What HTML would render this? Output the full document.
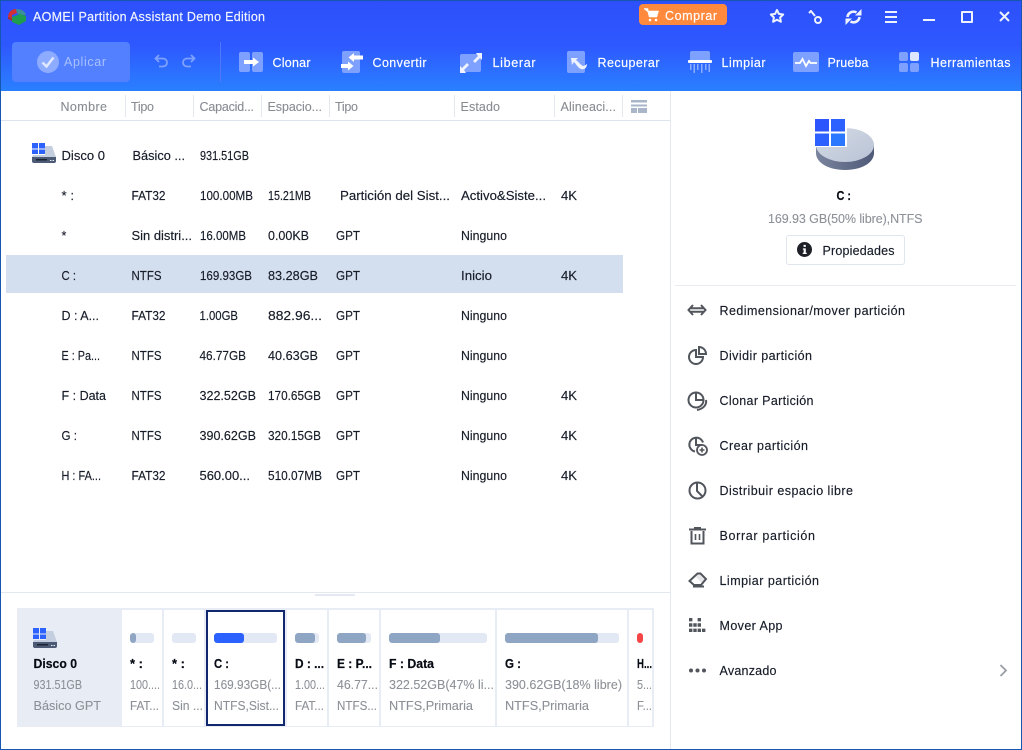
<!DOCTYPE html>
<html lang="es"><head><meta charset="utf-8"><title>AOMEI Partition Assistant Demo Edition</title>
<style>
html,body{margin:0;padding:0;background:#fff}
body{position:relative;width:1022px;height:750px;overflow:hidden;font-family:"Liberation Sans",sans-serif}
.a{position:absolute}
#L{position:absolute;left:0;top:0;z-index:5}
#L text{font-family:"Liberation Sans",sans-serif;font-size:12.5px;white-space:pre}
.d{fill:#161c28;stroke:#161c28;stroke-width:.15px}
.w{fill:#fff;stroke:#fff;stroke-width:.15px}
.h{fill:#878b92;stroke:#878b92;stroke-width:.1px}
.g{fill:#8c9097;stroke:#8c9097;stroke-width:.1px}
.b{fill:#070b14;stroke:#070b14;stroke-width:.2px;font-weight:bold}
.s{position:absolute;top:95px;width:1px;height:22px;background:#e4e8f0}
.c{position:absolute;top:610px;height:116px;background:#fff}
.bar{position:absolute;top:633px;height:10px;background:#e2e8f4;border-radius:3px;overflow:hidden}
.bar i{position:absolute;left:0;top:0;bottom:0;background:#8fa5c4;border-radius:3px}
</style></head><body>
<div class="a" style="left:0;top:0;width:1022px;height:91px;background:linear-gradient(180deg,#2d50fb 0,#2e58ff 50%,#2a80ff 100%)"></div>
<div class="a" style="left:0;top:0;width:1020px;height:748px;border:1px solid #1557b0;z-index:9;pointer-events:none"></div>

<svg class="a" style="left:8px;top:9px" width="19" height="16" viewBox="0 0 19 16"><path d="M0 8C0 3 4 0 8 0l1 4-5 2v3z" fill="#d22e35"/><path d="M8 0c5 0 9 2 10 6l-6 0-3-2z" fill="#3a8f9a"/><path d="M4 8l8-3 6 2v5l-7 4-7-3z" fill="#1f9c4e"/><path d="M0 8l4 1v3L0 10z" fill="#a3303a"/></svg>

<div class="a" style="left:639px;top:4px;width:88px;height:21px;background:#ff8a3d;border-radius:4px"></div>
<svg class="a" style="left:644px;top:8px" width="16" height="14" viewBox="0 0 16 14"><path d="M1 1h2.500l2 7.500h7L14 3.500H4.200z" fill="#fff" stroke="#fff" stroke-width="1.400"/><circle cx="6" cy="12" r="1.300" fill="#fff"/><circle cx="12" cy="12" r="1.300" fill="#fff"/></svg>

<svg class="a" style="left:769px;top:8px" width="16" height="16" viewBox="0 0 16 16"><path d="M8 2l1.900 3.900 4.300.6-3.100 3 .8 4.300L8 11.700l-3.900 2.100.8-4.300-3.100-3 4.300-.6z" fill="none" stroke="#eef2ff" stroke-width="2" stroke-linejoin="round"/></svg>
<svg class="a" style="left:807px;top:10px" width="16" height="15" viewBox="0 0 16 15"><path d="M2 3l2-2 4 5" stroke="#eef2ff" stroke-width="2" fill="none"/><circle cx="11" cy="10" r="3" fill="none" stroke="#eef2ff" stroke-width="2"/></svg>
<svg class="a" style="left:845px;top:9px" width="17" height="16" viewBox="0 0 17 16"><path d="M2.500 8a6 6 0 0 1 9-4.500M14.500 8a6 6 0 0 1-9 4.500" fill="none" stroke="#eef2ff" stroke-width="2.600"/><path d="M10 6.500h6.500V0zM7 9.500H.5V16z" fill="#eef2ff"/></svg>
<div class="a" style="left:885px;top:11px;width:12px;height:2px;background:#eef2ff;box-shadow:0 5px 0 #eef2ff,0 10px 0 #eef2ff"></div>
<div class="a" style="left:923px;top:19px;width:12px;height:2px;background:#eef2ff"></div>
<div class="a" style="left:961px;top:11px;width:8px;height:8px;border:2px solid #eef2ff;border-radius:1px"></div>
<svg class="a" style="left:998px;top:10px" width="13" height="13" viewBox="0 0 13 13"><path d="M2 2l9 9M11 2l-9 9" stroke="#eef2ff" stroke-width="2"/></svg>

<div class="a" style="left:12px;top:42px;width:118px;height:40px;background:#5280ff;border-radius:4px"></div>
<svg class="a" style="left:37px;top:51px" width="22" height="22" viewBox="0 0 22 22"><circle cx="11" cy="11" r="11" fill="#8dabff"/><path d="M5.500 11.500l4 4 7-9" fill="none" stroke="#dfe8ff" stroke-width="2.500"/></svg>
<svg class="a" style="left:154px;top:54px" width="16" height="14" viewBox="0 0 16 14"><path d="M5 1L1.500 4.500 5 8M2 4.500h7a4 4 0 0 1 0 8H5" fill="none" stroke="#7ea0ff" stroke-width="1.800"/></svg>
<svg class="a" style="left:180px;top:54px" width="16" height="14" viewBox="0 0 16 14"><path d="M11 1l3.500 3.500L11 8M14 4.500H7a4 4 0 0 0 0 8h4" fill="none" stroke="#7ea0ff" stroke-width="1.800"/></svg>
<div class="a" style="left:220px;top:42px;width:1px;height:40px;background:#4f78ff"></div>

<svg class="a" style="left:239px;top:52px" width="24" height="20" viewBox="0 0 24 20"><rect width="11" height="20" rx="2" fill="#7ea0ff"/><rect x="13" width="11" height="20" rx="2" fill="#7ea0ff"/><path d="M5 8h9V5.500l6 4.500-6 4.500V12H5z" fill="#fff"/></svg>
<svg class="a" style="left:341px;top:51px" width="23" height="22" viewBox="0 0 23 22"><rect x="1" width="18" height="22" rx="2" fill="#7ea0ff"/><path d="M22 4.500H13V2L7.500 6.500 13 11V8.500h9zM0 13h7v-2.500l5.500 4.500L7 19.500V17H0z" fill="#fff"/></svg>
<svg class="a" style="left:460px;top:53px" width="22" height="20" viewBox="0 0 22 20"><rect y="1" width="21" height="18" rx="2" fill="#7ea0ff"/><path d="M22 0v7l-2-2-5 5-2-2 5-5-2-3zM0 20v-7l2 2 5-5 2 2-5 5 2 3z" fill="#eef3ff"/></svg>
<svg class="a" style="left:567px;top:51px" width="22" height="22" viewBox="0 0 22 22"><rect width="18" height="22" rx="2" fill="#7ea0ff"/><path d="M4 7h7L9 9c3 2 5 6 8 6l3-2c0 4-3 6-6 5-3-1-5-5-7-7l-2 3z" fill="#eef3ff"/></svg>
<svg class="a" style="left:688px;top:50px" width="24" height="24" viewBox="0 0 24 24"><path d="M2 10V3a2 2 0 0 1 2-2h16a2 2 0 0 1 2 2v7z" fill="#7ea0ff"/><rect y="10" width="24" height="3" rx="1" fill="#fff"/><path d="M2 14h1.500v6H2zM5.500 14H7v9H5.500zM9 14h1.500v6H9zM13 14h1.500v9H13zM17 14h1.500v6H17zM20.500 14H22v8h-1.500z" fill="#8fadff"/></svg>
<svg class="a" style="left:793px;top:52px" width="26" height="20" viewBox="0 0 26 20"><rect width="26" height="20" rx="2" fill="#7ea0ff"/><path d="M2 11h5l2.500-4 3.500 7 3-5 1.500 2H24" fill="none" stroke="#fff" stroke-width="1.800"/></svg>
<svg class="a" style="left:899px;top:52px" width="20" height="20" viewBox="0 0 20 20"><rect width="9" height="9" rx="2" fill="#7ea0ff"/><rect x="11" width="9" height="9" rx="2" fill="#dde7ff"/><rect y="11" width="9" height="9" rx="2" fill="#7ea0ff"/><rect x="11" y="11" width="9" height="9" rx="2" fill="#7ea0ff"/></svg>

<div class="s" style="left:125px"></div><div class="s" style="left:193px"></div><div class="s" style="left:261px"></div><div class="s" style="left:329px"></div><div class="s" style="left:454px"></div><div class="s" style="left:554px"></div><div class="s" style="left:622px"></div>
<svg class="a" style="left:631px;top:100px" width="16" height="13" viewBox="0 0 16 13"><path d="M0 0h16v2.500H0zM0 4.500h16v2H0zM0 8h6v5H0zM7 8h9v5H7z" fill="#a9b6c9"/></svg>
<div class="a" style="left:1px;top:120px;width:669px;height:1px;background:#dde3ee"></div>
<div class="a" style="left:670px;top:91px;width:1px;height:658px;background:#e3e7f0"></div>
<div class="a" style="left:6px;top:255px;width:617px;height:38px;background:#d3deee"></div>

<svg class="a" style="left:32px;top:143px" width="24" height="20" viewBox="0 0 24 20"><path d="M13 3h7l4 11H0l1-2h12z" fill="#c5cede"/><path d="M0 14h24v4a2 2 0 0 1-2 2H2a2 2 0 0 1-2-2z" fill="#4d5a75"/><path d="M4 16h11v1.500H4z" fill="#1b2232"/><path d="M18 17h1.500v1H18zM20.500 17H22v1h-1.500z" fill="#e8edf5"/><path d="M0 0h6v5.500H0zM7 0h6v5.500H7zM0 6.500h6V11H0zM7 6.500h6V11H7z" fill="#2d62ff"/></svg>

<!-- right panel art -->
<svg class="a" style="left:815px;top:119px" width="60" height="52" viewBox="0 0 60 52">
<defs><linearGradient id="p" x1="0" y1="0" x2="1" y2="1"><stop offset="0" stop-color="#d5dbe6"/><stop offset="1" stop-color="#b9c3d5"/></linearGradient><linearGradient id="q" x1="0" y1="0" x2="1" y2="0"><stop offset="0" stop-color="#7a849e"/><stop offset="1" stop-color="#4f5a78"/></linearGradient></defs>
<path d="M1 26v8c0 10 13 17 29 17s29-7 29-17v-8z" fill="url(#q)"/><ellipse cx="30" cy="26" rx="29" ry="17" fill="url(#p)"/>
<rect width="32" height="28" fill="#fff"/>
<path d="M0 0h14v12.500H0z" fill="#2c55fd"/><path d="M16 0h14v12.500H16z" fill="#2c60ff"/><path d="M0 14.500h14V27H0z" fill="#2c60ff"/><path d="M16 14.500h14V27H16z" fill="#2a78ff"/></svg>
<div class="a" style="left:786px;top:235px;width:117px;height:28px;border:1px solid #e0e5ee;border-radius:3px"></div>
<svg class="a" style="left:797px;top:242px" width="15" height="15" viewBox="0 0 16 16"><circle cx="8" cy="8" r="8" fill="#1e2128"/><path d="M7 3h2.400v2.200H7zM6.300 6.800h3.100v4.700h1v1.300H6.100v-1.300h1V8.100h-.8z" fill="#fff"/></svg>
<div class="a" style="left:675px;top:285px;width:341px;height:1px;background:#e8ebf2"></div>

<svg class="a" style="left:687px;top:302px" width="20" height="16" viewBox="0 0 20 16"><path d="M6 3L1.500 8 6 13M14 3l4.500 5-4.500 5M3 6.200h14M3 9.800h14" fill="none" stroke="#51555c" stroke-width="2"/></svg>
<svg class="a" style="left:688px;top:346px" width="20" height="19" viewBox="0 0 20 19"><path d="M8 4a7 7 0 1 0 7 7H8z" fill="none" stroke="#51555c" stroke-width="2"/><path d="M11 1a7 7 0 0 1 7 7h-7z" fill="none" stroke="#51555c" stroke-width="2"/></svg>
<svg class="a" style="left:687px;top:391px" width="21" height="20" viewBox="0 0 21 20"><circle cx="9" cy="9" r="7.500" fill="none" stroke="#51555c" stroke-width="2"/><path d="M9 2v7h7" fill="none" stroke="#51555c" stroke-width="2"/><path d="M19 9c1 5-3 9-9 10" fill="none" stroke="#51555c" stroke-width="2"/></svg>
<svg class="a" style="left:688px;top:436px" width="20" height="20" viewBox="0 0 20 20"><path d="M7 15.500A7 7 0 1 1 15 6.500" fill="none" stroke="#51555c" stroke-width="2"/><path d="M8 1v8h6" fill="none" stroke="#51555c" stroke-width="2"/><circle cx="14" cy="14" r="5" fill="#fff" stroke="#51555c" stroke-width="1.800"/><path d="M11.500 14h5M14 11.500v5" stroke="#51555c" stroke-width="1.600"/></svg>
<svg class="a" style="left:688px;top:481px" width="19" height="19" viewBox="0 0 19 19"><circle cx="9.500" cy="9.500" r="8" fill="none" stroke="#51555c" stroke-width="2"/><path d="M9 2.500V10l5 5" fill="none" stroke="#51555c" stroke-width="2"/></svg>
<svg class="a" style="left:689px;top:527px" width="17" height="18" viewBox="0 0 17 18"><path d="M0 2.500h17M5 1h7" stroke="#51555c" stroke-width="2"/><path d="M2.500 4v12.500h12V4" fill="none" stroke="#51555c" stroke-width="2"/><path d="M6.500 7v6M10.500 7v6" stroke="#51555c" stroke-width="1.600"/></svg>
<svg class="a" style="left:688px;top:572px" width="20" height="16" viewBox="0 0 20 16"><path d="M1.500 9L9.500 1.500h3L18 7l-5 6H6z" fill="none" stroke="#51555c" stroke-width="2"/><path d="M5 14.500h11" stroke="#51555c" stroke-width="2"/><path d="M9.500 1.500h3L18 7l-4 4-6-6z" fill="#51555c" opacity=".15"/></svg>
<svg class="a" style="left:689px;top:618px" width="17" height="14" viewBox="0 0 17 14"><path d="M0 0h3.400v3.400H0zM8.600 0H12v3.400H8.600zM0 5.300h3.400v3.400H0zM4.300 5.300h3.400v3.400H4.300zM8.600 5.300H12v3.400H8.600zM0 10.600h3.400V14H0zM4.300 10.600h3.400V14H4.300zM8.600 10.600H12V14H8.600zM13 10.600h3.400V14H13z" fill="#51555c"/></svg>
<svg class="a" style="left:689px;top:668px" width="17" height="5" viewBox="0 0 17 5"><circle cx="2" cy="2.500" r="2" fill="#51555c"/><circle cx="8.500" cy="2.500" r="2" fill="#51555c"/><circle cx="15" cy="2.500" r="2" fill="#51555c"/></svg>
<svg class="a" style="left:999px;top:664px" width="9" height="13" viewBox="0 0 9 13"><path d="M1.500 1l5.500 5.500L1.500 12" fill="none" stroke="#9a9ea5" stroke-width="1.800"/></svg>

<!-- bottom -->
<div class="a" style="left:1px;top:592px;width:669px;height:1px;background:#e3e7f0"></div>
<div class="a" style="left:315px;top:594px;width:40px;height:2px;background:#e3e8f2"></div>
<div class="a" style="left:17px;top:608px;width:637px;height:119px;background:#e8ecf4"></div>
<div class="c" style="left:122px;width:40px"></div>
<div class="c" style="left:164px;width:40px"></div>
<div class="c" style="left:206px;width:75px;height:112px;border:2px solid #12286e"></div>
<div class="c" style="left:287px;width:40px"></div>
<div class="c" style="left:329px;width:50px"></div>
<div class="c" style="left:381px;width:114px"></div>
<div class="c" style="left:497px;width:130px"></div>
<div class="c" style="left:629px;width:23px"></div>

<svg class="a" style="left:33px;top:628px" width="24" height="20" viewBox="0 0 24 20"><path d="M13 3h7l4 11H0l1-2h12z" fill="#c5cede"/><path d="M0 14h24v4a2 2 0 0 1-2 2H2a2 2 0 0 1-2-2z" fill="#4d5a75"/><path d="M4 16h11v1.500H4z" fill="#1b2232"/><path d="M18 17h1.500v1H18zM20.500 17H22v1h-1.500z" fill="#e8edf5"/><path d="M0 0h6v5.500H0zM7 0h6v5.500H7zM0 6.500h6V11H0zM7 6.500h6V11H7z" fill="#2d62ff"/></svg>

<div class="bar" style="left:130px;width:24px"><i style="width:6px"></i></div>
<div class="bar" style="left:172px;width:24px"></div>
<div class="bar" style="left:214px;width:63px"><i style="width:30px;background:#2b62ff"></i></div>
<div class="bar" style="left:295px;width:24px"><i style="width:20px"></i></div>
<div class="bar" style="left:337px;width:34px"><i style="width:29px"></i></div>
<div class="bar" style="left:389px;width:98px"><i style="width:51px"></i></div>
<div class="bar" style="left:505px;width:114px"><i style="width:93px"></i></div>
<div class="bar" style="left:637px;width:6px;background:#f44646"></div>

<!-- text layer -->
<svg id="L" width="1022" height="750" viewBox="0 0 1022 750">
<text x="33" y="21" textLength="232" class="w" style="fill:#eef2ff">AOMEI Partition Assistant Demo Edition</text>
<text x="665" y="20" textLength="52" class="w">Comprar</text>
<text x="64" y="66" textLength="42" style="fill:#a9c0ff">Aplicar</text>
<text x="272.500" y="67" textLength="38" class="w">Clonar</text>
<text x="372.500" y="67" textLength="54" class="w">Convertir</text>
<text x="492.500" y="67" textLength="43" class="w">Liberar</text>
<text x="597.500" y="67" textLength="62" class="w">Recuperar</text>
<text x="721.500" y="67" textLength="44" class="w">Limpiar</text>
<text x="827.500" y="67" textLength="41" class="w">Prueba</text>
<text x="930.500" y="67" textLength="80" class="w">Herramientas</text>

<text x="60.500" y="111" textLength="46.500" class="h">Nombre</text>
<text x="131" y="111" textLength="23" class="h">Tipo</text>
<text x="199.500" y="111" textLength="54.500" class="h">Capacid...</text>
<text x="267.500" y="111" textLength="54.500" class="h">Espacio...</text>
<text x="335" y="111" textLength="23" class="h">Tipo</text>
<text x="460.500" y="111" textLength="39.500" class="h">Estado</text>
<text x="560.500" y="111" textLength="55.500" class="h">Alineaci...</text>

<text x="61.500" y="160" textLength="43.500" lengthAdjust="spacingAndGlyphs" class="d">Disco 0</text>
<text x="132.500" y="160" textLength="52.500" lengthAdjust="spacingAndGlyphs" class="d">Básico ...</text>
<text x="200" y="160" textLength="49" lengthAdjust="spacingAndGlyphs" class="d">931.51GB</text>

<text x="61.500" y="200" textLength="12.500" lengthAdjust="spacingAndGlyphs" class="d">* :</text>
<text x="131.500" y="200" textLength="34" lengthAdjust="spacingAndGlyphs" class="d">FAT32</text>
<text x="200" y="200" textLength="53" lengthAdjust="spacingAndGlyphs" class="d">100.00MB</text>
<text x="268" y="200" textLength="43" lengthAdjust="spacingAndGlyphs" class="d">15.21MB</text>
<text x="340" y="200" textLength="110" lengthAdjust="spacingAndGlyphs" class="d">Partición del Sist...</text>
<text x="461" y="200" textLength="85" lengthAdjust="spacingAndGlyphs" class="d">Activo&amp;Siste...</text>
<text x="561" y="200" textLength="16" lengthAdjust="spacingAndGlyphs" class="d">4K</text>

<text x="61.500" y="240" class="d">*</text>
<text x="131.500" y="240" textLength="60.500" lengthAdjust="spacingAndGlyphs" class="d">Sin distri...</text>
<text x="200" y="240" textLength="46" lengthAdjust="spacingAndGlyphs" class="d">16.00MB</text>
<text x="268" y="240" textLength="41" lengthAdjust="spacingAndGlyphs" class="d">0.00KB</text>
<text x="336" y="240" textLength="24" lengthAdjust="spacingAndGlyphs" class="d">GPT</text>
<text x="461" y="240" textLength="46" lengthAdjust="spacingAndGlyphs" class="d">Ninguno</text>

<text x="61.500" y="280" textLength="14.500" lengthAdjust="spacingAndGlyphs" class="d">C :</text>
<text x="131.500" y="280" textLength="30" lengthAdjust="spacingAndGlyphs" class="d">NTFS</text>
<text x="200" y="280" textLength="52" lengthAdjust="spacingAndGlyphs" class="d">169.93GB</text>
<text x="268" y="280" textLength="50" lengthAdjust="spacingAndGlyphs" class="d">83.28GB</text>
<text x="336" y="280" textLength="24" lengthAdjust="spacingAndGlyphs" class="d">GPT</text>
<text x="461" y="280" textLength="31" lengthAdjust="spacingAndGlyphs" class="d">Inicio</text>
<text x="561" y="280" textLength="16" lengthAdjust="spacingAndGlyphs" class="d">4K</text>

<text x="61.500" y="320" textLength="37.500" lengthAdjust="spacingAndGlyphs" class="d">D : A...</text>
<text x="131.500" y="320" textLength="34" lengthAdjust="spacingAndGlyphs" class="d">FAT32</text>
<text x="199.500" y="320" textLength="38.500" lengthAdjust="spacingAndGlyphs" class="d">1.00GB</text>
<text x="268" y="320" textLength="54" lengthAdjust="spacingAndGlyphs" class="d">882.96...</text>
<text x="336" y="320" textLength="24" lengthAdjust="spacingAndGlyphs" class="d">GPT</text>
<text x="461" y="320" textLength="46" lengthAdjust="spacingAndGlyphs" class="d">Ninguno</text>

<text x="61.500" y="360" textLength="38.500" lengthAdjust="spacingAndGlyphs" class="d">E : Pa...</text>
<text x="131.500" y="360" textLength="30" lengthAdjust="spacingAndGlyphs" class="d">NTFS</text>
<text x="199.500" y="360" textLength="46.500" lengthAdjust="spacingAndGlyphs" class="d">46.77GB</text>
<text x="268" y="360" textLength="50" lengthAdjust="spacingAndGlyphs" class="d">40.63GB</text>
<text x="336" y="360" textLength="24" lengthAdjust="spacingAndGlyphs" class="d">GPT</text>
<text x="461" y="360" textLength="46" lengthAdjust="spacingAndGlyphs" class="d">Ninguno</text>

<text x="61.500" y="400" textLength="44.500" lengthAdjust="spacingAndGlyphs" class="d">F : Data</text>
<text x="131.500" y="400" textLength="30" lengthAdjust="spacingAndGlyphs" class="d">NTFS</text>
<text x="199.500" y="400" textLength="56.500" lengthAdjust="spacingAndGlyphs" class="d">322.52GB</text>
<text x="268" y="400" textLength="53" lengthAdjust="spacingAndGlyphs" class="d">170.65GB</text>
<text x="336" y="400" textLength="24" lengthAdjust="spacingAndGlyphs" class="d">GPT</text>
<text x="461" y="400" textLength="46" lengthAdjust="spacingAndGlyphs" class="d">Ninguno</text>
<text x="561" y="400" textLength="16" lengthAdjust="spacingAndGlyphs" class="d">4K</text>

<text x="61.500" y="440" textLength="15.500" lengthAdjust="spacingAndGlyphs" class="d">G :</text>
<text x="131.500" y="440" textLength="30" lengthAdjust="spacingAndGlyphs" class="d">NTFS</text>
<text x="199.500" y="440" textLength="56.500" lengthAdjust="spacingAndGlyphs" class="d">390.62GB</text>
<text x="268" y="440" textLength="53" lengthAdjust="spacingAndGlyphs" class="d">320.15GB</text>
<text x="336" y="440" textLength="24" lengthAdjust="spacingAndGlyphs" class="d">GPT</text>
<text x="461" y="440" textLength="46" lengthAdjust="spacingAndGlyphs" class="d">Ninguno</text>
<text x="561" y="440" textLength="16" lengthAdjust="spacingAndGlyphs" class="d">4K</text>

<text x="61.500" y="480" textLength="39.500" lengthAdjust="spacingAndGlyphs" class="d">H : FA...</text>
<text x="131.500" y="480" textLength="34" lengthAdjust="spacingAndGlyphs" class="d">FAT32</text>
<text x="199.500" y="480" textLength="50.500" lengthAdjust="spacingAndGlyphs" class="d">560.00...</text>
<text x="268" y="480" textLength="54" lengthAdjust="spacingAndGlyphs" class="d">510.07MB</text>
<text x="336" y="480" textLength="24" lengthAdjust="spacingAndGlyphs" class="d">GPT</text>
<text x="461" y="480" textLength="46" lengthAdjust="spacingAndGlyphs" class="d">Ninguno</text>
<text x="561" y="480" textLength="16" lengthAdjust="spacingAndGlyphs" class="d">4K</text>

<text x="836.500" y="200" textLength="14.500" lengthAdjust="spacingAndGlyphs" class="b">C :</text>
<text x="768" y="223" textLength="154.500" class="g">169.93 GB(50% libre),NTFS</text>
<text x="822.500" y="255" textLength="72" class="d">Propiedades</text>

<text x="719.500" y="315" textLength="185.500" class="d">Redimensionar/mover partición</text>
<text x="719.500" y="360" textLength="92.500" class="d">Dividir partición</text>
<text x="719.500" y="405" textLength="94" class="d">Clonar Partición</text>
<text x="719.500" y="450" textLength="88.500" class="d">Crear partición</text>
<text x="719.500" y="495" textLength="133.500" class="d">Distribuir espacio libre</text>
<text x="719.500" y="540" textLength="95.500" class="d">Borrar partición</text>
<text x="719.500" y="585" textLength="99.500" class="d">Limpiar partición</text>
<text x="719.500" y="630" textLength="63" class="d">Mover App</text>
<text x="719.500" y="675" textLength="57" class="d">Avanzado</text>

<text x="33.500" y="668" textLength="43.500" lengthAdjust="spacingAndGlyphs" class="b">Disco 0</text>
<text x="33.500" y="689" textLength="48.500" lengthAdjust="spacingAndGlyphs" class="g">931.51GB</text>
<text x="33.500" y="710" textLength="67.500" lengthAdjust="spacingAndGlyphs" class="g">Básico GPT</text>

<text x="130" y="668" textLength="13" lengthAdjust="spacingAndGlyphs" class="b">* :</text><text x="130" y="689" textLength="30" lengthAdjust="spacingAndGlyphs" class="g">100....</text><text x="130" y="710" textLength="29" lengthAdjust="spacingAndGlyphs" class="g">FAT...</text>
<text x="172" y="668" textLength="13" lengthAdjust="spacingAndGlyphs" class="b">* :</text><text x="172" y="689" textLength="30" lengthAdjust="spacingAndGlyphs" class="g">16.0...</text><text x="172" y="710" textLength="31" lengthAdjust="spacingAndGlyphs" class="g">Sin ...</text>
<text x="214" y="668" textLength="15" lengthAdjust="spacingAndGlyphs" class="b">C :</text><text x="214" y="689" textLength="67" lengthAdjust="spacingAndGlyphs" class="g">169.93GB(...</text><text x="214" y="710" textLength="65" lengthAdjust="spacingAndGlyphs" class="g">NTFS,Sist...</text>
<text x="295" y="668" textLength="29" lengthAdjust="spacingAndGlyphs" class="b">D : ...</text><text x="295" y="689" textLength="30" lengthAdjust="spacingAndGlyphs" class="g">1.00...</text><text x="295" y="710" textLength="29" lengthAdjust="spacingAndGlyphs" class="g">FAT...</text>
<text x="337" y="668" textLength="35" lengthAdjust="spacingAndGlyphs" class="b">E : P...</text><text x="337" y="689" textLength="41" lengthAdjust="spacingAndGlyphs" class="g">46.77...</text><text x="337" y="710" textLength="40" lengthAdjust="spacingAndGlyphs" class="g">NTFS...</text>
<text x="389" y="668" textLength="45" lengthAdjust="spacingAndGlyphs" class="b">F : Data</text><text x="389" y="689" textLength="105" lengthAdjust="spacingAndGlyphs" class="g">322.52GB(47% li...</text><text x="389" y="710" textLength="84" lengthAdjust="spacingAndGlyphs" class="g">NTFS,Primaria</text>
<text x="505" y="668" textLength="16" lengthAdjust="spacingAndGlyphs" class="b">G :</text><text x="505" y="689" textLength="117" lengthAdjust="spacingAndGlyphs" class="g">390.62GB(18% libre)</text><text x="505" y="710" textLength="84" lengthAdjust="spacingAndGlyphs" class="g">NTFS,Primaria</text>
<text x="637" y="668" textLength="15" lengthAdjust="spacingAndGlyphs" class="b">H...</text><text x="637" y="689" textLength="15" lengthAdjust="spacingAndGlyphs" class="g">5...</text><text x="637" y="710" textLength="15" lengthAdjust="spacingAndGlyphs" class="g">F...</text>
</svg>
</body></html>
